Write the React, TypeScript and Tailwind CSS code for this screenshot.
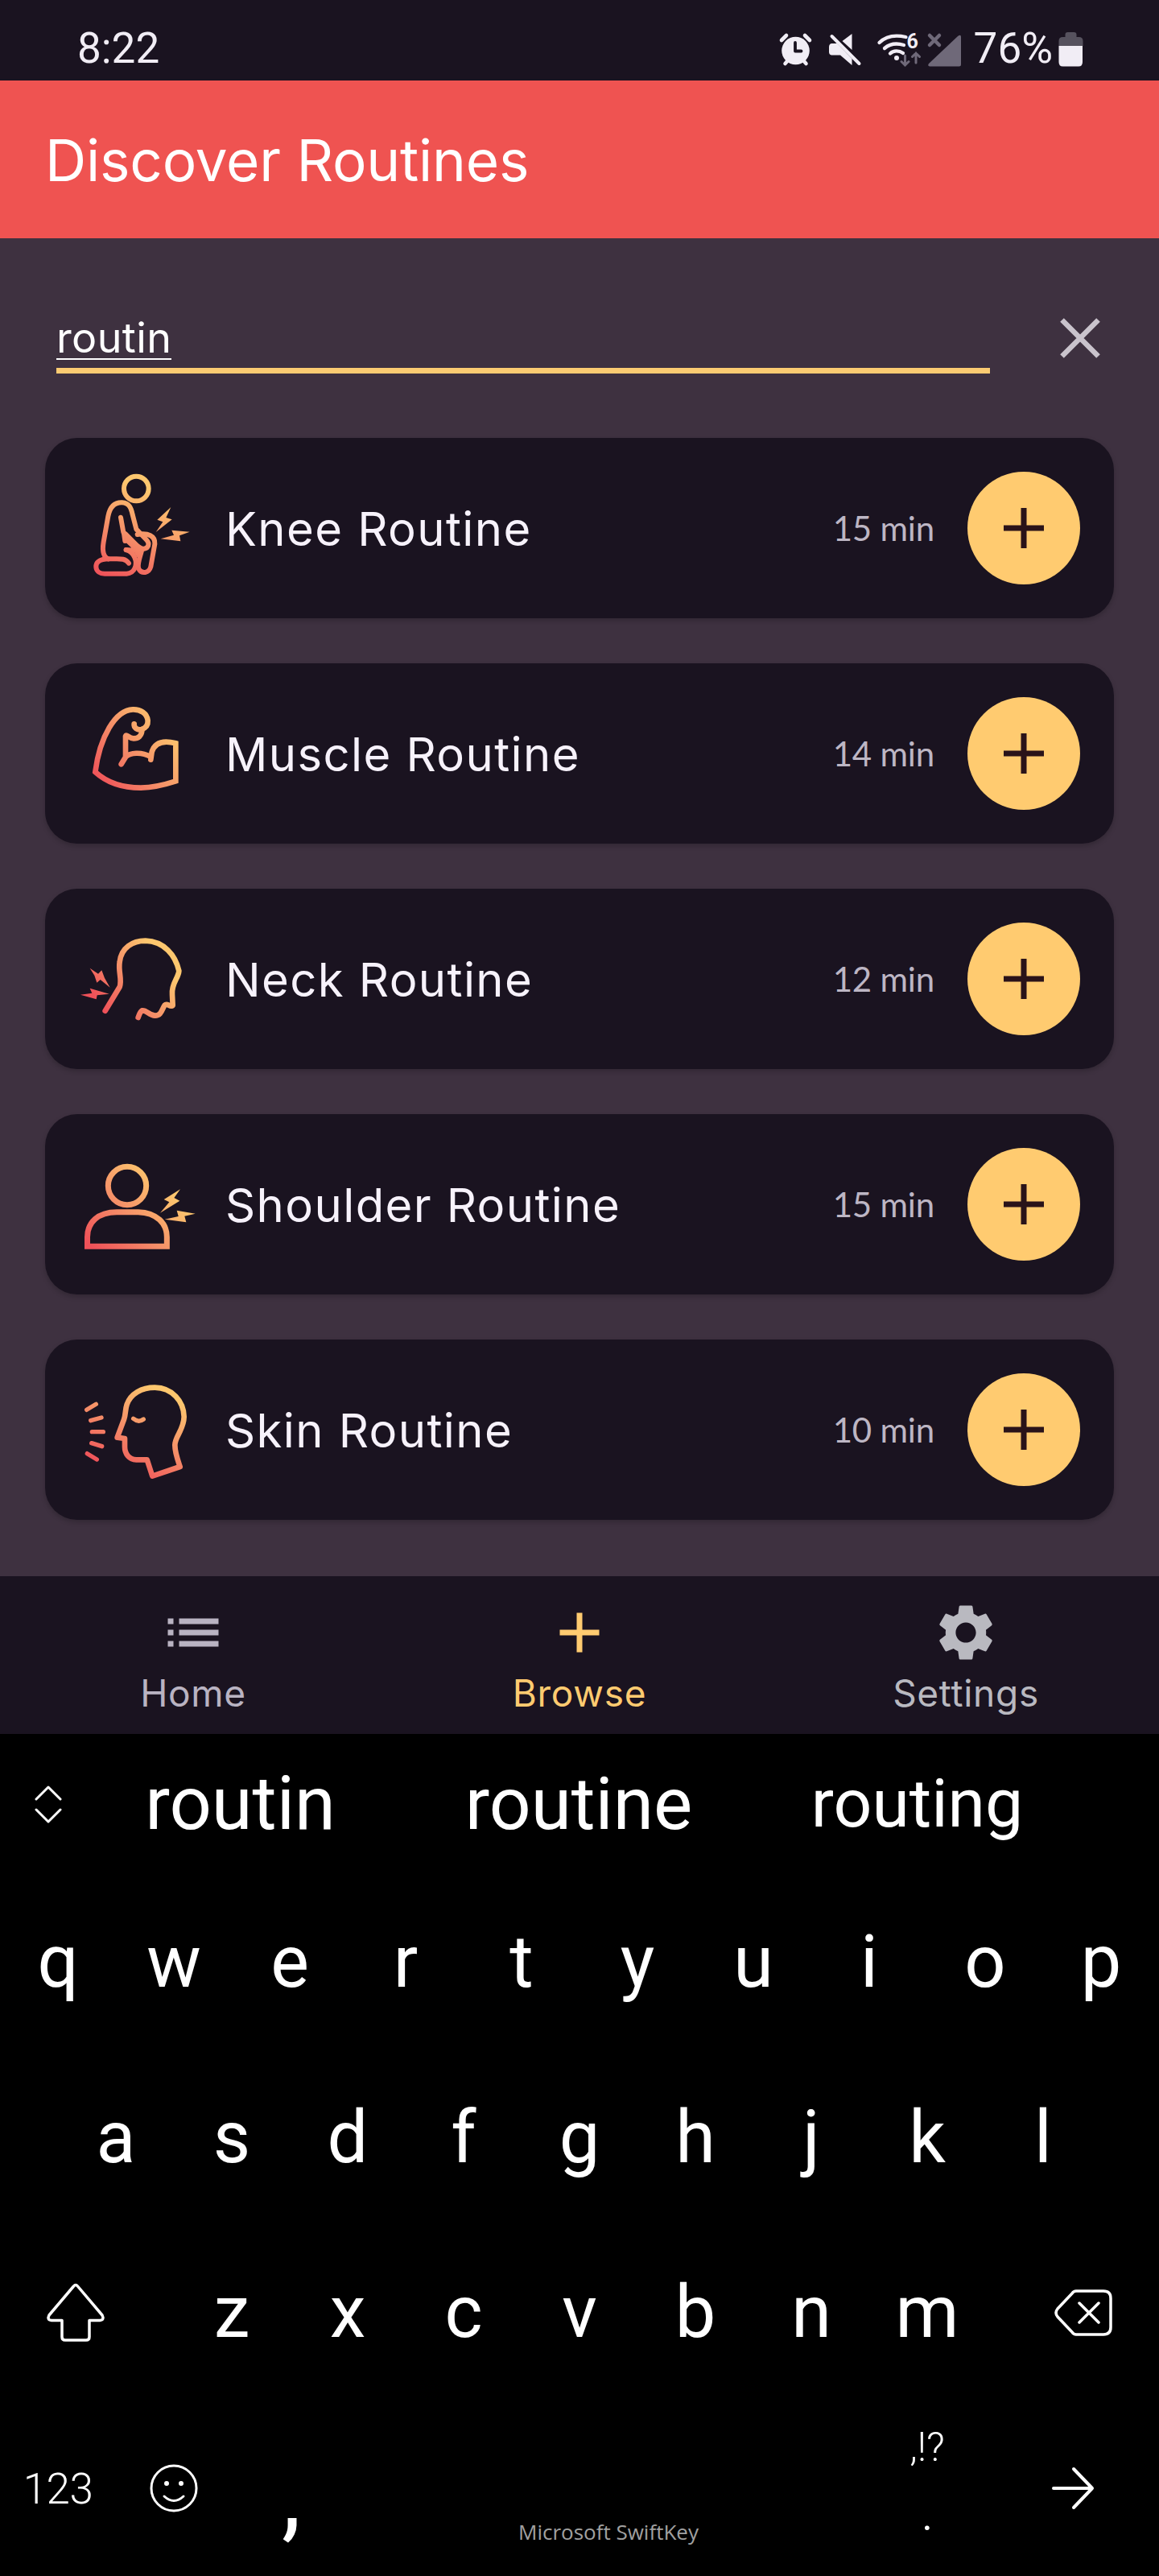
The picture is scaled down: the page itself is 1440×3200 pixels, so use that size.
import type { ReactNode } from "react";

const LIGHT = "#f1edf5";
const DIM = "#6f6979";

function AlarmIcon() {
  return (
    <svg viewBox="966 36 44 48" className="h-[48px] w-[44px]">
      <circle cx="988.5" cy="62" r="17.3" fill={LIGHT} />
      <path d="M971 49l6-6M1006 49l-6-6M975.5 78l3.5-4M1001.500 78l-3.500-4" stroke={LIGHT} strokeWidth="4.6" strokeLinecap="round" fill="none" />
      <path d="M988 52v10.500h7.500" stroke="#1a1320" strokeWidth="3.800" strokeLinecap="round" strokeLinejoin="round" fill="none" />
    </svg>
  );
}

function MuteIcon() {
  return (
    <svg viewBox="1028 36 44 48" className="h-[48px] w-[44px]">
      <path d="M1046.500 50l12-9v20zM1033 53h7l18.500 19v8l-14.500-12.500h-11q-3-.5-3-4v-6q0-4 3-4.500z" fill={LIGHT} />
      <path d="M1033.500 44l34 34" stroke={LIGHT} strokeWidth="4" strokeLinecap="round" />
    </svg>
  );
}

function WifiIcon() {
  return (
    <svg viewBox="1088 36 56 48" className="h-[48px] w-[56px]">
      <g stroke={LIGHT} strokeWidth="4.300" strokeLinecap="round" fill="none">
        <path d="M1092.500 52c9-9 20-10 33-7" />
        <path d="M1099 59c7-6 14-7 24-4" />
        <path d="M1106 65.500c4-4 11-4 16-.5" />
      </g>
      <circle cx="1114" cy="71" r="3" fill={LIGHT} />
      <text x="1126.500" y="59" fontFamily="Roboto, sans-serif" fontWeight="700" fontSize="25" fill={LIGHT}>6</text>
      <path d="M1124.500 68v12m-4.500-4.500l4.500 4.500 4.500-4.500M1138 77v-12m-4.500 4.500l4.500-4.500 4.500 4.500" stroke={DIM} strokeWidth="3" fill="none" strokeLinecap="round" />
    </svg>
  );
}

function SignalIcon() {
  return (
    <svg viewBox="1151 36 44 48" className="h-[48px] w-[44px]">
      <path d="M1155 81.500q-3-1-1-3.500l36-34q4-3 4 1v34q0 2.500-2.500 2.500z" fill={DIM} />
      <path d="M1155 43l12 12M1167 43l-12 12" stroke={DIM} strokeWidth="4.500" strokeLinecap="round" />
    </svg>
  );
}

function BatteryIcon() {
  return (
    <svg viewBox="1314 36 32 48" className="h-[48px] w-[32px]">
      <path d="M1315.500 56v-6q0-5 5-5h3v-3q0-3 3-3h8q3 0 3 3v3h3q5 0 5 5v6z" fill="#56525e" />
      <path d="M1315.500 56h29.500v20q0 5.500-5 5.500h-19.500q-5 0-5-5.500z" fill={LIGHT} />
    </svg>
  );
}

type GlyphProps = {
  id: string;
  viewBox: string;
  from: [number, number];
  to: [number, number];
  width?: number;
  children: ReactNode;
};

/* Outline glyph painted with a red-to-yellow gradient running from `from` to `to`. */
function Glyph({ id, viewBox, from, to, width = 20, children }: GlyphProps) {
  return (
    <svg viewBox={viewBox} className="size-36 shrink-0">
      <defs>
        <linearGradient id={id} gradientUnits="userSpaceOnUse" x1={from[0]} y1={from[1]} x2={to[0]} y2={to[1]}>
          <stop offset="0" stopColor="#ef5159" />
          <stop offset="0.5" stopColor="#f58f68" />
          <stop offset="1" stopColor="#fdc76e" />
        </linearGradient>
      </defs>
      <g fill="none" stroke={`url(#${id})`} strokeWidth={width} strokeLinecap="round">
        {children}
      </g>
    </svg>
  );
}

function KneeIcon() {
  return (
    <Glyph id="knee" viewBox="0 0 432 432" from={[90, 400]} to={[240, 70]} width={18}>
      <circle cx="208" cy="69" r="46" />
      <path strokeLinejoin="round" d="M180 347C166 326 145 331 106 331C66 332 57 346 58 361C59 378 73 386 90 386H172C203 384 213 352 202 326C196 311 186 301 170 297" />
      <path strokeLinejoin="round" d="M104 331C80 322 82 292 86 268L103 172C110 135 130 120 155 121C182 123 189 142 194 166L208 220L247 261C260 275 252 291 237 293C224 294 214 284 206 276L168 238L160 232L150 176" />
      <path strokeLinejoin="round" d="M162 236L166 264M170 297L206 300L216 316M170 258L216 302" />
      <path strokeLinejoin="round" d="M212 240C252 233 279 245 277 275L262 360C255 384 229 389 217 368C210 352 222 325 228 300" />
      <g fill="url(#knee)" stroke="none">
        <path d="M337 138L286 185L307 193L281 231L341 184L319 177Z" />
        <path d="M407 230L340 224L348 242L299 256L373 265L369 244Z" />
      </g>
    </Glyph>
  );
}

function MuscleIcon() {
  return (
    <Glyph id="muscle" viewBox="60 72 432 432" from={[120, 390]} to={[390, 180]}>
      <path d="M260 178C258 192 272 202 288 198C306 192 312 180 311 165C308 138 284 123 255 124C190 126 132 226 115 357C160 398 220 416 285 416C330 415 375 404 415 391V250C370 238 338 245 326 282L322 311" />
      <path d="M322 300C285 280 245 286 229 300L212 328M228 300V224C232 214 240 232 258 232C276 232 287 222 289 204" />
    </Glyph>
  );
}

function NeckIcon() {
  return (
    <Glyph id="neck" viewBox="60 72 432 432" from={[120, 370]} to={[350, 200]}>
      <path strokeLinejoin="round" d="M152 407L206 318C216 290 200 262 206 225C212 172 254 146 302 146C372 148 414 200 427 258C426 284 398 306 402 346L404 387C394 396 384 376 374 386C364 400 362 425 338 425C314 424 308 404 290 406C282 410 279 422 275 432" />
      <g fill="url(#neck)" stroke="none">
        <path d="M95 248L126 269L139 256L150 285L170 320L134 291L121 302L112 275Z" />
        <path d="M60 347L103 341L95 323L167 344L122 349L119 364Z" />
      </g>
    </Glyph>
  );
}

function ShoulderIcon() {
  return (
    <Glyph id="shoulder" viewBox="60 72 432 432" from={[85, 430]} to={[340, 180]} width={21}>
      <circle cx="234" cy="219" r="71" />
      <path d="M85.500 445V410C86 355 125 317 195 317H275C345 319 382 360 382 410V445Z" />
      <g fill="url(#shoulder)" stroke="none">
        <path d="M432 232L371 270L391 280L357 320L430 275L409 264Z" />
        <path d="M488 323L419 311L425 333L374 344L454 355L448 332Z" />
      </g>
    </Glyph>
  );
}

function SkinIcon() {
  return (
    <Glyph id="skin" viewBox="60 72 432 432" from={[190, 450]} to={[350, 140]}>
      <path strokeLinejoin="round" d="M197 317L222 250C229 232 226 214 233 194C247 154 288 131 337 131C402 132 445 182 446 240C445 290 411 314 412 346C412 374 422 400 431 426L328 461L308 400H268C240 399 225 377 225 352V321Z" />
      <path strokeWidth="16" d="M257 247Q276 263 295 249M83 214L118 193M98 254L138 243M103 296H145M101 338L140 350M85 377L121 399" />
    </Glyph>
  );
}

const routines = [
  { name: "Knee Routine", time: "15 min", icon: <KneeIcon /> },
  { name: "Muscle Routine", time: "14 min", icon: <MuscleIcon /> },
  { name: "Neck Routine", time: "12 min", icon: <NeckIcon /> },
  { name: "Shoulder Routine", time: "15 min", icon: <ShoulderIcon /> },
  { name: "Skin Routine", time: "10 min", icon: <SkinIcon /> },
];

function StatusBar() {
  return (
    <div className="flex h-[100px] items-center justify-between bg-[#1a1320] pt-[21px] pl-24 pr-[94px] font-['Roboto',sans-serif] text-[53px] leading-none text-[#f1edf5]">
      <span>8:22</span>
      <div className="flex items-center">
        <AlarmIcon />
        <span className="ml-[18px] flex"><MuteIcon /></span>
        <span className="ml-4 flex"><WifiIcon /></span>
        <span className="ml-[7px] flex"><SignalIcon /></span>
        <span className="ml-[15px] mr-[6px]">76%</span>
        <BatteryIcon />
      </div>
    </div>
  );
}

function RoutineCard({ name, time, icon }: { name: string; time: string; icon: ReactNode }) {
  return (
    <li className="flex h-[224px] items-center rounded-[40px] bg-[#1a1320] pl-[44px] pr-[42px] shadow-[0_3px_6px_rgba(0,0,0,0.2)]">
      {icon}
      <span className="ml-[36px] flex-1 pt-0.5 text-[58px] leading-none tracking-[1.400px] text-[#f7f2fb]">{name}</span>
      <span className="mr-[41px] font-['Lato',sans-serif] text-[42px] leading-none tracking-[-0.200px] text-[#bdb6c4]">{time}</span>
      <button className="flex size-[140px] items-center justify-center rounded-full bg-[#ffcb70]">
        <svg viewBox="0 0 50 50" className="size-[50px]">
          <path d="M25 0V50M0 25H50" stroke="#2a1319" strokeWidth="7" />
        </svg>
      </button>
    </li>
  );
}

function NavItem({ label, color, children }: { label: string; color: string; children: ReactNode }) {
  return (
    <div className={`flex flex-1 flex-col items-center pt-[28px] ${color}`}>
      <svg viewBox="0 0 24 24" className="size-[84px] fill-current">{children}</svg>
      <span className="mt-[7px] text-[46px] leading-[52px] tracking-[0.700px]">{label}</span>
    </div>
  );
}

function LetterRow({ letters }: { letters: string }) {
  return (
    <>
      {letters.split("").map((l) => (
        <span key={l} className="w-36 text-center">{l}</span>
      ))}
    </>
  );
}

const lineIcon = "fill-none stroke-white stroke-[3.500px]";

function Keyboard() {
  return (
    <div className="bg-black font-['Roboto',sans-serif] text-[90px] leading-none text-white">
      <div className="flex h-[174px] items-center">
        <div className="flex w-[88px] justify-center pl-8">
          <svg viewBox="0 0 34 48" className="h-[48px] w-[34px] fill-none stroke-white stroke-3" strokeLinecap="round" strokeLinejoin="round">
            <path d="M2 18L17 3L32 18M2 31L17 46L32 31" />
          </svg>
        </div>
        <span className="w-[421px] text-center text-[92px]">routin</span>
        <span className="w-[420px] text-center text-[91px]">routine</span>
        <span className="w-[421px] text-center text-[84px]">routing</span>
      </div>
      <div className="flex h-[218px] items-center pt-px"><LetterRow letters="qwertyuiop" /></div>
      <div className="flex h-[218px] items-center px-[72px] pt-px"><LetterRow letters="asdfghjkl" /></div>
      <div className="flex h-[218px] items-center">
        <div className="flex w-[216px] pl-[57px]">
          <svg viewBox="0 0 74 74" className={`size-[74px] ${lineIcon}`} strokeLinejoin="round">
            <path d="M34.500 4Q37 1 39.500 4L70 40Q73 46 67 46.500H54V67Q54 71 50 71H24Q20 71 20 67V46.500H7Q1 46 4 40Z" />
          </svg>
        </div>
        <LetterRow letters="zxcvbnm" />
        <div className="flex w-[216px] pl-[85px]">
          <svg viewBox="0 0 74 60" className={`h-[60px] w-[74px] ${lineIcon}`} strokeLinecap="round" strokeLinejoin="round">
            <path d="M28 3H62Q71 3 71 12V48Q71 57 62 57H28Q25 57 23 54L5 35Q1 30 5 25L23 6Q25 3 28 3ZM32 18L56 42M56 18L32 42" />
          </svg>
        </div>
      </div>
      <div className="flex h-[218px] items-center">
        <span className="w-36 pt-0.5 text-center text-[53px] font-light tracking-[-0.500px]">123</span>
        <div className="flex w-36 justify-center">
          <svg viewBox="0 0 60 60" className="size-[60px] fill-none stroke-white stroke-3" strokeLinecap="round">
            <circle cx="30" cy="30" r="28" />
            <path d="M18 40Q30 51 42 40" />
            <path d="M21 24v.1M39 24v.1" className="stroke-6" />
          </svg>
        </div>
        <span className="w-36 pt-[18px] pl-1 text-center text-[122px] leading-none">,</span>
        <span className="w-[648px] pt-[108px] text-center font-['Open_Sans',sans-serif] text-[26px] text-[#a0a0a0]">Microsoft SwiftKey</span>
        <div className="flex h-full w-36 flex-col items-center pt-[33px] text-[50px] font-light">
          <span className="leading-[50px]">,!?</span>
          <span className="mt-[36px] font-normal leading-[50px]">.</span>
        </div>
        <div className="flex w-[216px] pl-[81px]">
          <svg viewBox="0 0 56 56" className="size-[56px] fill-none stroke-white stroke-4" strokeLinecap="round" strokeLinejoin="round">
            <path d="M4 28H52M29 4L52 28L29 52" />
          </svg>
        </div>
      </div>
    </div>
  );
}

export default function App() {
  return (
    <div className="flex h-[3200px] w-[1440px] flex-col overflow-hidden bg-[#3e3140] font-['Inter',sans-serif]">
      <StatusBar />
      <header className="flex h-[196px] items-center bg-[#ef5351] pt-0.5 pl-14 text-[71px] leading-none tracking-[-0.200px] text-white">
        <h1>Discover Routines</h1>
      </header>

      <main className="flex h-[1662px] flex-col px-14 pt-[92px]">
        <div className="flex h-[76px] justify-between pl-[14px] pr-[17px]">
          <div className="h-[76px] w-[1160px] border-b-[7px] border-[#fbcb72]">
            <span className="mt-[3px] inline-block h-[56px] border-b-2 border-white pt-[3px] text-[52px] leading-[52px] tracking-[0.400px] text-white">routin</span>
          </div>
          <svg viewBox="0 0 50 50" className="mt-[7px] size-[50px]">
            <path d="M2.500 2.500L47.500 47.500M47.500 2.500L2.500 47.500" stroke="#c9c3cc" strokeWidth="6.500" />
          </svg>
        </div>
        <ul className="mt-20 flex flex-col gap-14">
          {routines.map((r) => (
            <RoutineCard key={r.name} {...r} />
          ))}
        </ul>
      </main>

      <nav className="flex h-[196px] bg-[#1a1320]">
        <NavItem label="Home" color="text-[#b9b3c2]">
          <path d="M3 13h2v-2H3v2zm0 4h2v-2H3v2zm0-8h2V7H3v2zm4 4h14v-2H7v2zm0 4h14v-2H7v2zM7 7v2h14V7H7z" />
        </NavItem>
        <NavItem label="Browse" color="text-[#ffcb70]">
          <path d="M19 13h-6v6h-2v-6H5v-2h6V5h2v6h6z" />
        </NavItem>
        <NavItem label="Settings" color="text-[#b9b9c0]">
          <path d="M19.140 12.940c.04-.3.060-.61.060-.94 0-.32-.02-.64-.07-.94l2.030-1.580c.18-.14.230-.41.120-.61l-1.920-3.320c-.12-.22-.37-.29-.59-.22l-2.390.96c-.5-.38-1.030-.7-1.620-.94l-.36-2.540c-.04-.24-.24-.41-.48-.41h-3.840c-.24 0-.43.17-.47.410l-.36 2.540c-.59.24-1.130.57-1.620.94l-2.390-.96c-.22-.08-.47 0-.59.220L2.740 8.870c-.12.21-.08.470.120.610l2.030 1.580c-.05.300-.09.630-.09.940s.02.640.070.940l-2.030 1.580c-.18.140-.23.410-.12.610l1.920 3.320c.12.220.37.290.59.220l2.390-.96c.5.380 1.030.7 1.620.94l.36 2.540c.05.240.24.410.48.410h3.840c.24 0 .44-.17.470-.41l.36-2.540c.59-.24 1.130-.56 1.620-.94l2.390.96c.22.080.47 0 .59-.22l1.920-3.320c.12-.22.070-.47-.12-.61l-2.010-1.580zM12 15.600c-1.980 0-3.600-1.620-3.600-3.600s1.620-3.600 3.600-3.600 3.600 1.620 3.600 3.600-1.620 3.600-3.600 3.600z" />
        </NavItem>
      </nav>

      <Keyboard />
    </div>
  );
}
